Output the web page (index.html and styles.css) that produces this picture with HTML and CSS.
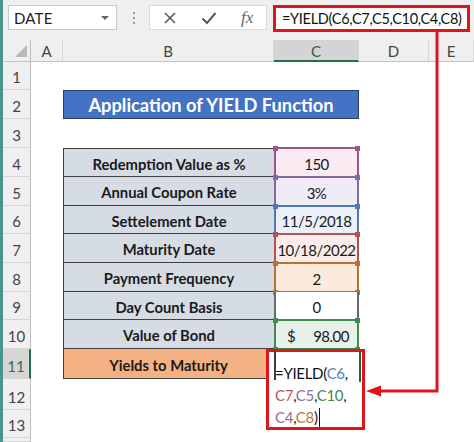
FILE: index.html
```html
<!DOCTYPE html>
<html>
<head>
<meta charset="utf-8">
<link rel="stylesheet" href="styles.css">
</head>
<body>
<div class="app">
  <div class="bar">
    <div class="namebox"><span class="nb-text">DATE</span><span class="caret"></span></div>
    <div class="grip"><i></i><i></i><i></i></div>
    <div class="btns">
      <svg class="ico" width="14" height="14" viewBox="0 0 14 14"><path d="M2 2 L12 12 M12 2 L2 12" stroke="#5a5a5a" stroke-width="1.6" fill="none"/></svg>
      <svg class="ico" width="16" height="14" viewBox="0 0 16 14"><path d="M1.5 7.5 L6 12 L14.5 2" stroke="#5a5a5a" stroke-width="2" fill="none"/></svg>
      <span class="fx">fx</span>
    </div>
    <div class="fbox">=YIELD(C6,C7,C5,C10,C4,C8)</div>
  </div>

  <div class="sheet">
    <!-- header -->
    <div class="ch corner"><span class="tri"></span></div>
    <div class="ch">A</div>
    <div class="ch">B</div>
    <div class="ch sel">C</div>
    <div class="ch">D</div>
    <div class="ch">E</div>

    <!-- row 1 -->
    <div class="rh">1</div><div></div><div></div><div></div><div></div><div></div>
    <!-- row 2 -->
    <div class="rh">2</div><div></div><div class="title">Application of YIELD Function</div><div></div><div></div>
    <!-- row 3 -->
    <div class="rh">3</div><div></div><div></div><div></div><div></div><div></div>
    <!-- row 4 -->
    <div class="rh">4</div><div></div><div class="lab first">Redemption Value as %</div><div class="val hl c-pink">150</div><div></div><div></div>
    <!-- row 5 -->
    <div class="rh">5</div><div></div><div class="lab">Annual Coupon Rate</div><div class="val hl c-purple">3%</div><div></div><div></div>
    <!-- row 6 -->
    <div class="rh">6</div><div></div><div class="lab">Settelement Date</div><div class="val hl c-blue">11/5/2018</div><div></div><div></div>
    <!-- row 7 -->
    <div class="rh">7</div><div></div><div class="lab">Maturity Date</div><div class="val hl c-red">10/18/2022</div><div></div><div></div>
    <!-- row 8 -->
    <div class="rh">8</div><div></div><div class="lab">Payment Frequency</div><div class="val hl c-orange">2</div><div></div><div></div>
    <!-- row 9 -->
    <div class="rh">9</div><div></div><div class="lab">Day Count Basis</div><div class="val plain">0</div><div></div><div></div>
    <!-- row 10 -->
    <div class="rh">10</div><div></div><div class="lab">Value of Bond</div><div class="val hl c-green money"><span>$</span><span>98.00</span></div><div></div><div></div>
    <!-- row 11 -->
    <div class="rh sel">11</div><div></div><div class="lab orange">Yields to Maturity</div><div></div><div></div><div></div>
    <!-- row 12 -->
    <div class="rh">12</div><div></div><div></div><div></div><div></div><div></div>
    <!-- row 13 -->
    <div class="rh">13</div><div></div><div></div><div></div><div></div><div></div>
    <!-- row 14 -->
    <div class="rh"></div><div></div><div></div><div></div><div></div><div></div>
  </div>

  <div class="editor">
    <span class="edge-l"></span><span class="edge-r"></span>
    <div class="eline">=YIELD(<span class="t-blue">C6</span>,</div>
    <div class="eline"><span class="t-red">C7</span>,<span class="t-purple">C5</span>,<span class="t-green">C10</span>,</div>
    <div class="eline"><span class="t-pink">C4</span>,<span class="t-orange">C8</span>)<span class="cursor"></span></div>
  </div>

  <svg class="arrow" width="474" height="442" viewBox="0 0 474 442">
    <polyline points="437,32 437,391 379,391" fill="none" stroke="#e1141c" stroke-width="3"/>
    <polygon points="366,391 381,385.5 381,396.5" fill="#e1141c"/>
  </svg>
</div>
</body>
</html>
```

FILE: styles.css
```css
body {
  margin: 0;
}

.app {
  position: relative;
  width: 474px;
  height: 442px;
  overflow: hidden;
  background: #ffffff;
  border-left: 3px solid #4c958f;
  box-sizing: border-box;
  font-family: Lato, "Open Sans", sans-serif;
  color: #111;
}

/* ---------- formula bar ---------- */
.bar {
  height: 40px;
  box-sizing: border-box;
  background: #efefef;
  display: flex;
  align-items: flex-start;
  padding-top: 5px;
}

.namebox {
  margin-left: 5px;
  width: 109px;
  height: 25px;
  box-sizing: border-box;
  background: #fff;
  border: 1px solid #c9c9c9;
  display: flex;
  align-items: center;
  justify-content: space-between;
  padding: 0 7px 0 5px;
}

.nb-text {
  font-size: 15px;
  color: #222;
  letter-spacing: 0.2px;
}

.caret {
  width: 0;
  height: 0;
  border-left: 4px solid transparent;
  border-right: 4px solid transparent;
  border-top: 4px solid #666;
}

.grip {
  margin-left: 15px;
  width: 4px;
  height: 25px;
  display: flex;
  flex-direction: column;
  align-items: center;
  justify-content: center;
  gap: 3px;
}

.grip i {
  display: block;
  width: 2px;
  height: 2px;
  background: #9a9a9a;
}

.btns {
  margin-left: 13px;
  width: 118px;
  height: 25px;
  box-sizing: border-box;
  background: #fff;
  border: 1px solid #dadada;
  display: flex;
  align-items: center;
  padding-left: 13px;
  gap: 24px;
}

.fx {
  font-family: "Liberation Serif", serif;
  font-style: italic;
  font-size: 17px;
  color: #666;
}

.fbox {
  margin-left: 6px;
  width: 197px;
  height: 27px;
  box-sizing: border-box;
  border: 3px solid #e1141c;
  background: #fff;
  font-size: 14.5px;
  letter-spacing: -0.3px;
  line-height: 21px;
  padding-left: 6px;
  white-space: nowrap;
  overflow: hidden;
  color: #111;
}

/* ---------- sheet ---------- */
.sheet {
  display: grid;
  grid-template-columns: 28px 32px 211px 85px 70px 45px;
  grid-template-rows: 22px 28px 29px 29px 29px 29px 28px 29px 29px 28px 29px 30px 31px 28px 4px;
}

.ch {
  background: #efefef;
  border-right: 1px solid #d6d6d6;
  border-bottom: 1px solid #c4c4c4;
  font-size: 15px;
  color: #444;
  display: flex;
  align-items: center;
  justify-content: center;
  padding-top: 1px;
  box-sizing: border-box;
}

.ch.sel {
  background: #d4d4d4;
  border-bottom: 2px solid #217346;
  color: #2e5f44;
}

.corner {
  position: relative;
  border-right: 1px solid #bdbdbd;
}

.tri {
  position: absolute;
  right: 3px;
  bottom: 4px;
  width: 0;
  height: 0;
  border-left: 12px solid transparent;
  border-bottom: 12px solid #b9b9b9;
}

.rh {
  background: #f0f0f0;
  border-right: 1px solid #bdbdbd;
  border-bottom: 1px solid #d6d6d6;
  box-sizing: border-box;
  font-size: 15px;
  color: #444;
  display: flex;
  align-items: flex-end;
  justify-content: center;
  padding-bottom: 3px;
}

.rh.sel {
  background: #d6d6d6;
  border-right: 2px solid #217346;
  color: #3b6a50;
}

.title {
  grid-column: span 2;
  background: #4472c4;
  border: 1px solid #2b3f63;
  color: #fff;
  font-weight: bold;
  font-size: 18.3px;
  display: flex;
  align-items: center;
  justify-content: center;
  box-sizing: border-box;
  padding-top: 1px;
}

.lab {
  background: #d6dce4;
  border-left: 1.5px solid #3f3f3f;
  border-bottom: 1.5px solid #3f3f3f;
  box-sizing: border-box;
  font-weight: bold;
  font-size: 14.8px;
  color: #1a1a1a;
  display: flex;
  align-items: center;
  justify-content: center;
  padding-top: 2px;
}

.lab.first {
  border-top: 1.5px solid #3f3f3f;
}

.lab.orange {
  background: #f4b183;
  border-right: 1.5px solid #3f3f3f;
}

.val {
  position: relative;
  box-sizing: border-box;
  font-size: 15px;
  letter-spacing: -0.5px;
  color: #1a1a1a;
  display: flex;
  align-items: center;
  justify-content: center;
  padding-top: 2px;
}

.hl {
  border: 2px solid var(--c);
  margin: -1px 0;
}

.hl::before,
.hl::after {
  content: "";
  position: absolute;
  left: -3.5px;
  width: 5px;
  height: 5px;
  background: var(--c);
  box-shadow: 82px 0 0 var(--c);
}

.hl::before {
  top: -3.5px;
}

.hl::after {
  bottom: -3.5px;
}

.c-pink {
  --c: #a0548b;
  background: #f9ebf1;
}

.c-purple {
  --c: #8468a6;
  background: #efecf6;
}

.c-blue {
  --c: #5079b8;
  background: #ebf0f8;
}

.c-red {
  --c: #b3524f;
  background: #f9edeb;
}

.c-orange {
  --c: #b8712f;
  background: #fcebdc;
}

.c-green {
  --c: #3e8c4f;
  background: #e8f1e9;
}

.plain {
  border-left: 2px solid #6a6a6a;
  border-right: 2px solid #6a6a6a;
  background: #fff;
}

.money {
  justify-content: space-between;
  padding-left: 11px;
  padding-right: 8px;
}

/* ---------- in-cell editor (annotated) ---------- */
.editor {
  position: absolute;
  left: 263px;
  top: 349px;
  width: 99px;
  height: 81px;
  box-sizing: border-box;
  border: 3px solid #e1141c;
  background: #fff;
  padding-top: 10px;
  padding-left: 6px;
  font-size: 15px;
  letter-spacing: -0.3px;
  line-height: 22px;
  color: #111;
  white-space: nowrap;
}

.edge-l {
  position: absolute;
  left: 5px;
  top: -1px;
  width: 1.5px;
  height: 29px;
  background: #3f3f3f;
}

.edge-r {
  position: absolute;
  left: 90px;
  top: -1px;
  width: 2px;
  height: 31px;
  background: #2f5a3c;
}

.eline {
  position: relative;
}

.t-blue { color: #5b7fb8; }
.t-red { color: #b05a58; }
.t-purple { color: #8a6fab; }
.t-green { color: #3f8a50; }
.t-pink { color: #9a6a9a; }
.t-orange { color: #b57a3a; }

.cursor {
  display: inline-block;
  width: 1px;
  height: 19px;
  background: #111;
  vertical-align: -4px;
  margin-left: 1px;
}

.arrow {
  position: absolute;
  left: -3px;
  top: 0;
  pointer-events: none;
}
```
